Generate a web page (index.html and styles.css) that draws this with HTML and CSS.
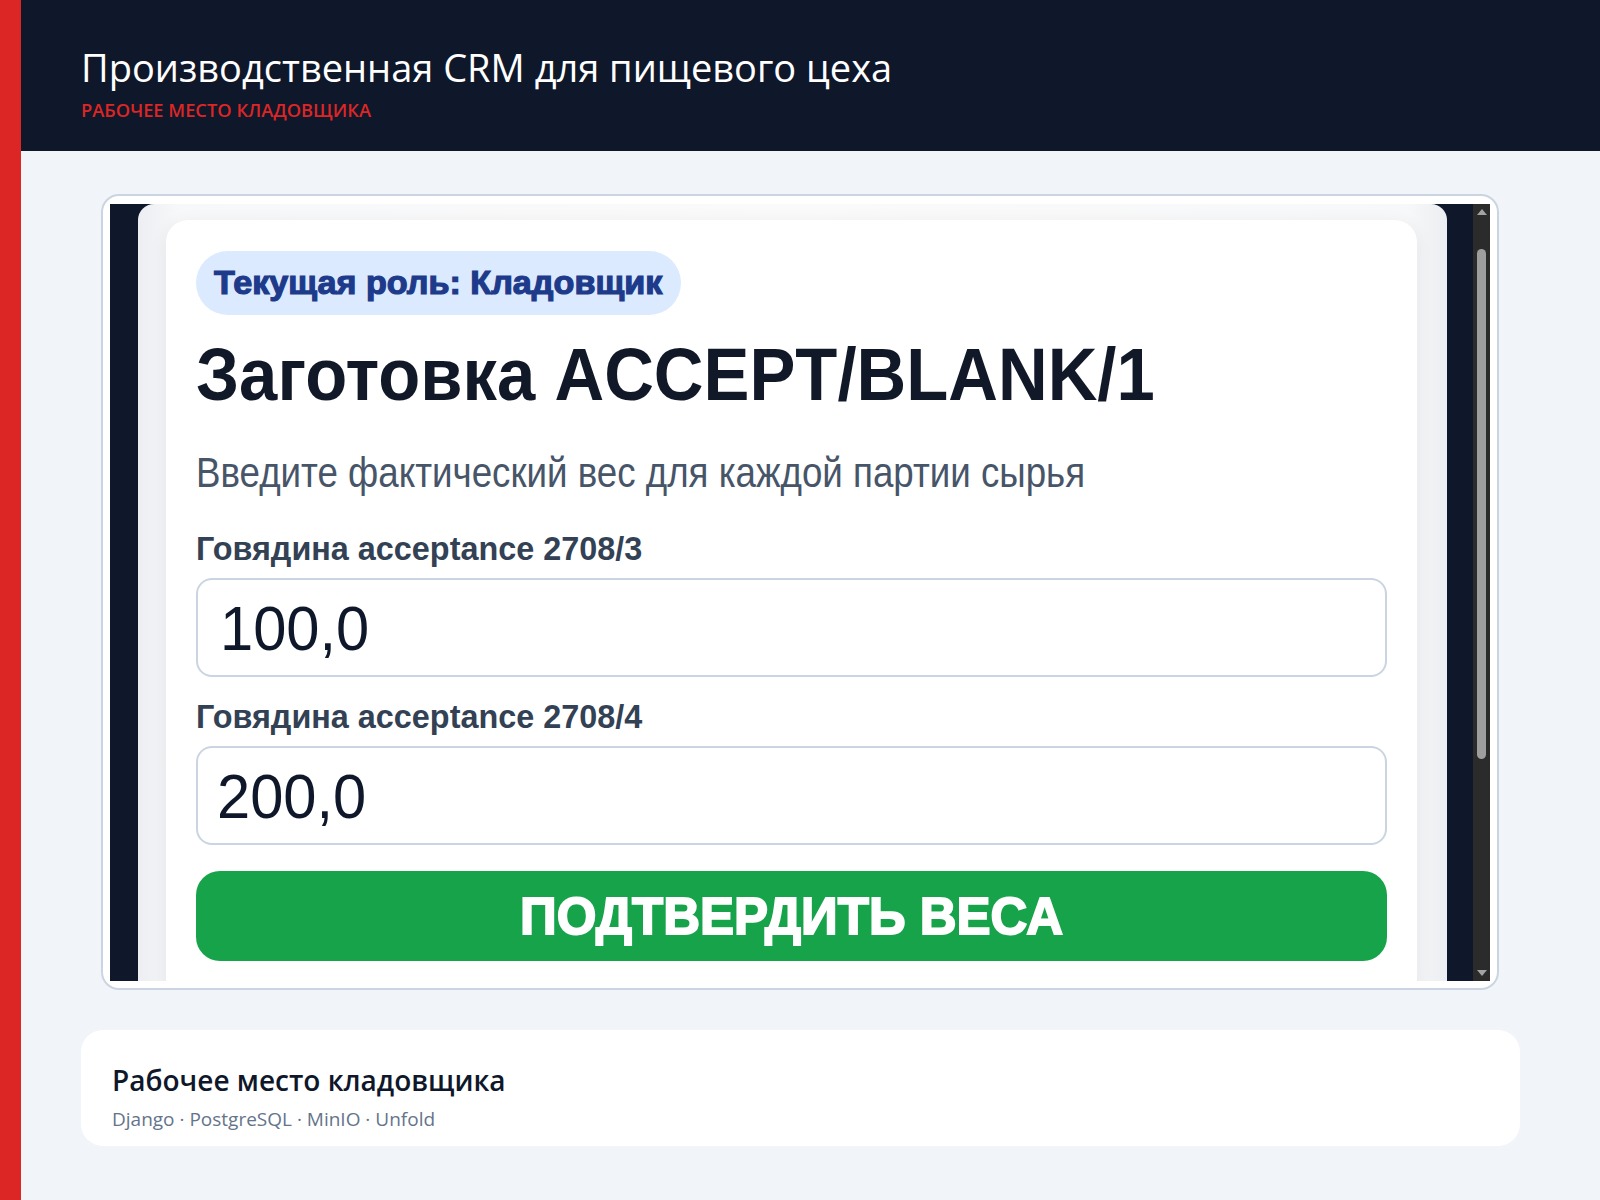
FILE: index.html
```html
<!DOCTYPE html>
<html lang="ru">
<head>
<meta charset="utf-8">
<title>Производственная CRM для пищевого цеха</title>
<link rel="stylesheet" href="styles.css">
</head>
<body>
<div class="app">
  <header class="topbar">
    <h1 class="topbar-title">Производственная CRM для пищевого цеха</h1>
    <div class="topbar-sub">РАБОЧЕЕ МЕСТО КЛАДОВЩИКА</div>
  </header>
  <main class="main">
    <section class="frame">
      <div class="shot">
        <div class="edge edge-left"></div>
        <div class="page">
          <div class="card">
            <div class="badge"><span class="sq sq-badge">Текущая роль: Кладовщик</span></div>
            <h2 class="heading"><span class="sq sq-heading">Заготовка ACCEPT/BLANK/1</span></h2>
            <p class="lead"><span class="sq sq-lead">Введите фактический вес для каждой партии сырья</span></p>
            <div class="field">
              <div class="label"><span class="sq sq-label">Говядина acceptance 2708/3</span></div>
              <div class="input"><span class="sq sq-input">100,0</span></div>
            </div>
            <div class="field field-second">
              <div class="label"><span class="sq sq-label">Говядина acceptance 2708/4</span></div>
              <div class="input"><span class="sq sq-input">200,0</span></div>
            </div>
            <div class="btn"><span class="sq sq-btn">ПОДТВЕРДИТЬ ВЕСА</span></div>
          </div>
        </div>
        <div class="edge edge-right"></div>
        <div class="scrollbar">
          <div class="sb-arrow sb-up"></div>
          <div class="sb-track"><div class="sb-thumb"></div></div>
          <div class="sb-arrow sb-down"></div>
        </div>
      </div>
    </section>
    <section class="info">
      <div class="info-title">Рабочее место кладовщика</div>
      <div class="info-sub">Django · PostgreSQL · MinIO · Unfold</div>
    </section>
  </main>
</div>
</body>
</html>
```

FILE: styles.css
```css
* { box-sizing: border-box; }
html, body { margin: 0; padding: 0; }
body {
  background: #f1f5f9;
  font-family: "Open Sans", "Noto Sans", sans-serif;
  color: #0f172a;
}
.app {
  min-height: 1200px;
  border-left: 21px solid #dc2626;
}
.topbar {
  height: 151px;
  background: #0f172a;
  padding: 42px 0 0 60px;
}
.topbar-title {
  margin: 0;
  font-size: 38px;
  line-height: 50px;
  font-weight: 500;
  color: #ffffff;
}
.topbar-sub {
  margin-top: 6px;
  font-size: 18.3px;
  line-height: 24px;
  color: #dc2626;
  font-weight: 600;
}
.main {
  padding: 43px 80px 0 60px;
}
.frame {
  margin: 0 21px 0 20px;
  border: 2px solid #cbd5e1;
  border-radius: 18px;
  background: #ffffff;
  padding: 8px 7px 7px 7px;
}
.shot {
  height: 777px;
  display: flex;
  overflow: hidden;
  background: #0f172a;
  font-family: "Liberation Sans", Arial, sans-serif;
}
.edge-left { width: 28px; background: #0f172a; }
.edge-right { width: 26px; background: #0f172a; }
.page {
  flex: 1;
  background: linear-gradient(90deg, #eceef1 0, #f7f8f9 3%, #fafafb 50%, #f7f8f9 97%, #eceef1 100%);
  border-radius: 16px 16px 0 0;
  padding: 16px 30px 0 28px;
}
.card {
  background: #ffffff;
  border-radius: 22px;
  box-shadow: 0 4px 18px rgba(15, 23, 42, 0.07);
  padding: 31px 30px 40px 30px;
  display: flex;
  flex-direction: column;
  align-items: flex-start;
}
.sq {
  display: inline-block;
  white-space: nowrap;
  transform-origin: left center;
}
.sq-badge { transform: scaleX(1.035); }
.sq-heading { transform: scaleX(0.93); }
.sq-lead { transform: scaleX(0.874); }
.sq-label { transform: scaleX(0.952); }
.sq-input { transform: scaleX(0.946); }
.sq-btn { transform: scaleX(1.0); transform-origin: center center; }
.badge {
  height: 64px;
  width: 485px;
  border-radius: 32px;
  background: #dbeafe;
  color: #1e3a8a;
  font-weight: 700;
  font-size: 33px;
  display: flex;
  align-items: center;
  padding-left: 18px;
  -webkit-text-stroke: 1.2px #1e3a8a;
}
.heading {
  margin: 15px 0 0 0;
  font-size: 74px;
  line-height: 89px;
  font-weight: 700;
  color: #111827;
}
.lead {
  margin: 31px 0 0 0;
  font-size: 42px;
  line-height: 46px;
  color: #475569;
}
.field {
  margin-top: 34px;
  align-self: stretch;
}
.field-second { margin-top: 21px; }
.label {
  font-size: 34px;
  line-height: 37px;
  font-weight: 700;
  color: #334155;
}
.input {
  margin-top: 11px;
  height: 99px;
  border: 2px solid #cbd5e1;
  border-radius: 16px;
  display: flex;
  align-items: center;
  padding-left: 22px;
  font-size: 63px;
  color: #0f172a;
}
.field-second .input { padding-left: 19px; }
.btn {
  margin-top: 26px;
  align-self: stretch;
  height: 90px;
  border-radius: 24px;
  background: #16a34a;
  color: #ffffff;
  font-size: 51px;
  font-weight: 700;
  display: flex;
  align-items: center;
  justify-content: center;
  -webkit-text-stroke: 1.8px #ffffff;
}
.scrollbar {
  width: 17px;
  background: #2b2b2b;
  display: flex;
  flex-direction: column;
  align-items: center;
}
.sb-arrow {
  width: 0;
  height: 0;
  border-left: 5px solid transparent;
  border-right: 5px solid transparent;
}
.sb-up { margin-top: 5px; border-bottom: 6px solid #a3a3a3; }
.sb-down { margin-bottom: 5px; border-top: 6px solid #a3a3a3; }
.sb-track {
  flex: 1;
  width: 100%;
  padding: 34px 4px 0 4px;
}
.sb-thumb {
  height: 510px;
  background: #9e9e9e;
  border-radius: 5px;
}
.info {
  margin-top: 40px;
  background: #ffffff;
  border-radius: 22px;
  padding: 31px 31px 13px 31px;
}
.info-title {
  font-size: 28px;
  line-height: 38px;
  font-weight: 600;
  color: #0f172a;
}
.info-sub {
  margin-top: 6px;
  font-size: 19px;
  line-height: 28px;
  color: #64748b;
}
```
